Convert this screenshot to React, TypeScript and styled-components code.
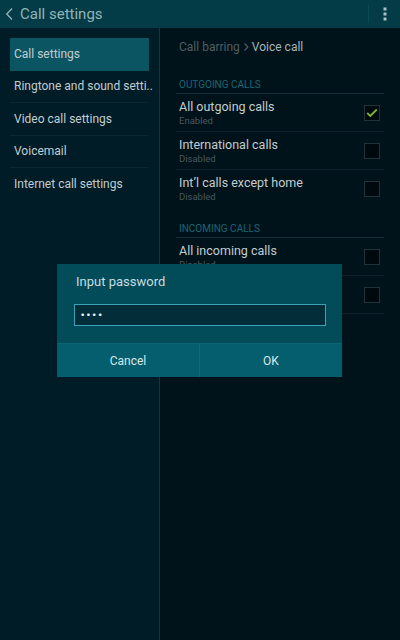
import React from 'react';
import styled, {createGlobalStyle} from 'styled-components';

type MenuItemProps = {
	selected?: boolean
}

type RowProps = {
	divider?: boolean
}

const GlobalStyle = createGlobalStyle`
	html, body {
		margin: 0;
		padding: 0;
		background: #00121a;
	}
	* {
		box-sizing: border-box;
	}
`

const Screen = styled.div`
	position: relative;
	display: flex;
	flex-direction: column;
	width: 400px;
	height: 640px;
	overflow: hidden;
	font-family: Roboto, "Noto Sans", sans-serif;
`

const Header = styled.div`
	display: flex;
	align-items: center;
	height: 28px;
	flex-shrink: 0;
	padding-left: 5px;
	background-color: #033b46;
`

const Title = styled.span`
	flex: 1;
	margin-left: 6px;
	font-size: 15px;
	color: #93b3b8;
`

const HeaderDivider = styled.div`
	width: 1px;
	height: 18px;
	background-color: #0a4a55;
`

const MenuButton = styled.div`
	display: flex;
	justify-content: center;
	width: 31px;
`

const Body = styled.div`
	display: flex;
	flex: 1;
`

const Sidebar = styled.div`
	display: flex;
	flex-direction: column;
	width: 160px;
	padding: 10px 10px 0 10px;
	background-color: #001c26;
	border-right: 1px solid #17343b;
`

const MenuItem = styled.div<MenuItemProps>`
	display: flex;
	align-items: center;
	height: 32.5px;
	padding-left: 4px;
	font-size: 12px;
	white-space: nowrap;
	color: #c3cdd0;
	background-color: ${props => props.selected ? '#0a5561' : 'transparent'};
	border-bottom: 1px solid ${props => props.selected ? 'transparent' : '#0a262e'};

	&:last-child {
		border-bottom: none;
	}
`

const Content = styled.div`
	display: flex;
	flex-direction: column;
	flex: 1;
	padding: 11px 16px 0 16px;
	background-color: #00121a;
`

const Breadcrumb = styled.div`
	display: flex;
	align-items: center;
	height: 16px;
	padding-left: 3px;
	font-size: 12px;
	color: #4f5f63;

	b {
		font-weight: 400;
		color: #a9b5b8;
	}
`

const SectionTitle = styled.div`
	height: 17px;
	line-height: 16px;
	padding-left: 3px;
	font-size: 10px;
	color: #1d6675;
	border-bottom: 1px solid #13303a;
`

const OutgoingTitle = styled(SectionTitle)`
	margin-top: 22px;
`

const IncomingTitle = styled(SectionTitle)`
	margin-top: 13px;
`

const Row = styled.div<RowProps>`
	display: flex;
	align-items: center;
	height: 38px;
	padding-left: 3px;
	border-bottom: 1px solid ${props => props.divider ? '#0b2029' : 'transparent'};
`

const RowText = styled.div`
	display: flex;
	flex-direction: column;
	flex: 1;
	padding-top: 2px;
`

const RowTitle = styled.span`
	font-size: 12.5px;
	line-height: 14px;
	color: #c3cdd0;
`

const RowSub = styled.span`
	font-size: 9.5px;
	line-height: 13px;
	color: #4a585c;
`

const Checkbox = styled.div`
	display: flex;
	align-items: center;
	justify-content: center;
	width: 16px;
	height: 16px;
	margin-right: 4px;
	border: 1px solid #1f3338;
	background-color: #00090d;
`

const Dialog = styled.div`
	position: absolute;
	left: 57px;
	top: 264px;
	display: flex;
	flex-direction: column;
	width: 285px;
	background-color: #024b58;
`

const DialogTitle = styled.div`
	padding: 10px 19px 0 19px;
	height: 34px;
	font-size: 13px;
	color: #c6dde1;
`

const PasswordField = styled.div`
	display: flex;
	align-items: center;
	height: 22px;
	margin: 6px 16px 17px 17px;
	padding-left: 5px;
	background-color: #032e39;
	border: 1px solid #3aa2b6;
	font-family: "DejaVu Sans", sans-serif;
	font-size: 9px;
	letter-spacing: 0.5px;
	color: #e8f2f4;
`

const Buttons = styled.div`
	display: flex;
	height: 34px;
	background-color: #045e6d;
	border-top: 1px solid #0a6675;
`

const DialogButton = styled.div`
	display: flex;
	align-items: center;
	justify-content: center;
	flex: 1;
	font-size: 12px;
	color: #d8e8eb;

	& + & {
		border-left: 1px solid #0d6a79;
	}
`

const outgoing = [
	{title: 'All outgoing calls', sub: 'Enabled', checked: true},
	{title: 'International calls', sub: 'Disabled', checked: false},
	{title: 'Int\u2019l calls except home', sub: 'Disabled', checked: false},
]

const incoming = [
	{title: 'All incoming calls', sub: 'Disabled', checked: false},
	{title: 'Incoming calls when roaming', sub: 'Disabled', checked: false},
]

const menu = ['Call settings', 'Ringtone and sound setti..', 'Video call settings', 'Voicemail', 'Internet call settings']

const CheckMark = () => (
	<svg width='12' height='10' viewBox='0 0 12 10'>
		<path d='M1.2 5 L4.3 8 L10.8 1.5' fill='none' stroke='#7fb62e' strokeWidth='1.8' />
	</svg>
)

const App = () => {
	return (
		<Screen>
			<GlobalStyle />
			<Header>
				<svg width='9' height='14' viewBox='0 0 9 14'>
					<path d='M7 1.5 L1.8 7 L7 12.5' fill='none' stroke='#8fb0b5' strokeWidth='1.4' />
				</svg>
				<Title>Call settings</Title>
				<HeaderDivider />
				<MenuButton>
					<svg width='4' height='14' viewBox='0 0 4 14'>
						<rect x='0.5' y='0.5' width='3' height='3' fill='#a9c2c6' />
						<rect x='0.5' y='5.5' width='3' height='3' fill='#a9c2c6' />
						<rect x='0.5' y='10.5' width='3' height='3' fill='#a9c2c6' />
					</svg>
				</MenuButton>
			</Header>
			<Body>
				<Sidebar>
					{menu.map((item, i) => (
						<MenuItem key={item} selected={i === 0}>{item}</MenuItem>
					))}
				</Sidebar>
				<Content>
					<Breadcrumb>
						Call barring
						<svg width='12' height='10' viewBox='0 0 12 10'>
							<path d='M4.5 1.5 L8 5 L4.5 8.5' fill='none' stroke='#4f5f63' strokeWidth='1.1' />
						</svg>
						<b>Voice call</b>
					</Breadcrumb>
					<OutgoingTitle>OUTGOING CALLS</OutgoingTitle>
					{outgoing.map((row, i) => (
						<Row key={row.title} divider={i < outgoing.length - 1}>
							<RowText>
								<RowTitle>{row.title}</RowTitle>
								<RowSub>{row.sub}</RowSub>
							</RowText>
							<Checkbox>{row.checked && <CheckMark />}</Checkbox>
						</Row>
					))}
					<IncomingTitle>INCOMING CALLS</IncomingTitle>
					{incoming.map(row => (
						<Row key={row.title} divider>
							<RowText>
								<RowTitle>{row.title}</RowTitle>
								<RowSub>{row.sub}</RowSub>
							</RowText>
							<Checkbox>{row.checked && <CheckMark />}</Checkbox>
						</Row>
					))}
				</Content>
			</Body>
			<Dialog>
				<DialogTitle>Input password</DialogTitle>
				<PasswordField>{'\u2022\u2022\u2022\u2022'}</PasswordField>
				<Buttons>
					<DialogButton>Cancel</DialogButton>
					<DialogButton>OK</DialogButton>
				</Buttons>
			</Dialog>
		</Screen>
	);
};

export default App;
